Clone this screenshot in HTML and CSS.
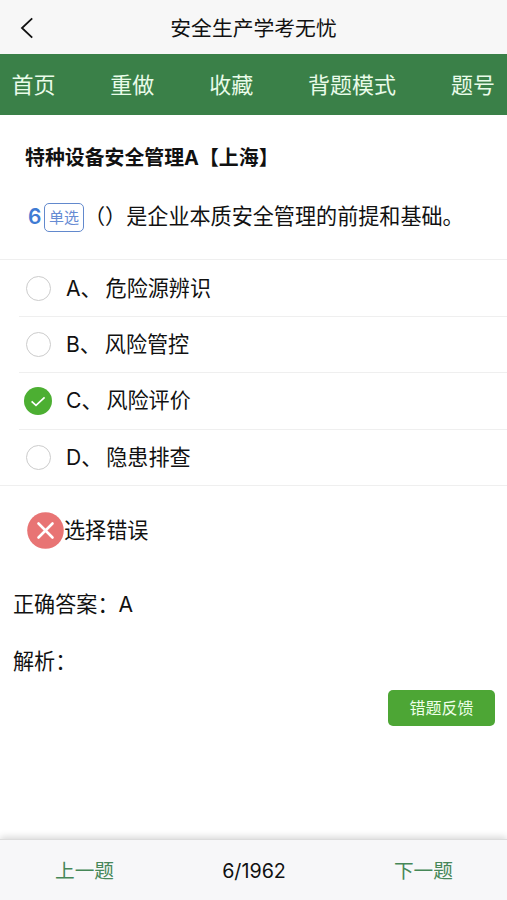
FILE: index.html
```html
<!DOCTYPE html>
<html lang="zh-CN">
<head>
<meta charset="utf-8">
<title>安全生产学考无忧</title>
<link rel="stylesheet" href="styles.css">
</head>
<body>
<div class="app">
  <header class="titlebar">
    <svg class="back" viewBox="0 0 14 22"><path d="M12.2 1.4 2 11l10.2 9.6"/></svg>
    <h1>安全生产学考无忧</h1>
  </header>
  <nav class="tabs">
    <a>首页</a><a>重做</a><a>收藏</a><a>背题模式</a><a>题号</a>
  </nav>
  <main>
    <h2 class="subject">特种设备安全管理A【上海】</h2>
    <div class="question"><b class="number">6</b><span class="tag">单选</span><span class="stem">（）是企业本质安全管理的前提和基础。</span></div>
    <ul class="options">
      <li><span class="mark"><i class="radio"></i></span><span class="label">A、 危险源辨识</span></li>
      <li><span class="mark"><i class="radio"></i></span><span class="label">B、 风险管控</span></li>
      <li><span class="mark"><svg class="checked" viewBox="0 0 28 28"><circle cx="14" cy="14" r="14"/><path d="m7.6 14.3 4.4 4 8.6-7.9"/></svg></span><span class="label">C、 风险评价</span></li>
      <li><span class="mark"><i class="radio"></i></span><span class="label">D、 隐患排查</span></li>
    </ul>
    <div class="result">
      <svg class="wrong" viewBox="0 0 37 37"><circle cx="18.5" cy="18.5" r="18.3"/><path d="m11.5 11.5 14 14m0-14-14 14"/></svg>
      <span class="verdict">选择错误</span>
    </div>
    <p class="answer">正确答案：A</p>
    <p class="analysis">解析：</p>
    <button class="feedback">错题反馈</button>
  </main>
  <footer class="pager">
    <a class="prev">上一题</a>
    <span class="count">6/1962</span>
    <a class="next">下一题</a>
  </footer>
</div>
</body>
</html>
```
FILE: styles.css
```css
* { box-sizing: border-box; margin: 0; padding: 0; }
body {
  font-family: Inter, "Noto Sans CJK SC", sans-serif;
  font-size: 21.1px;
  color: #111;
  background: #fff;
}
.app { height: 900px; display: flex; flex-direction: column; overflow: hidden; }
.titlebar {
  height: 54px;
  display: grid;
  grid-template-columns: 60px 1fr 60px;
  align-items: center;
  background: #f7f7f7;
}
.back { width: 14px; height: 22px; margin: 2px 0 0 20px; fill: none; stroke: #111; stroke-width: 1.8; }
.titlebar h1 { padding-top: 3px; font-size: 20.8px; font-weight: 400; line-height: 30px; text-align: center; white-space: nowrap; }
.tabs {
  height: 61px;
  padding: 1px 12px 0 11.5px;
  display: flex;
  justify-content: space-between;
  align-items: center;
  background: #3a8048;
  color: #e9fbe9;
  font-size: 22px;
  line-height: 32px;
}
main { flex: 1; display: flex; flex-direction: column; }
.subject { margin: 28px 0 0 25px; font-size: 19.9px; font-weight: 700; line-height: 30px; white-space: nowrap; }
.question { height: 86px; padding: 0 0 0 28px; display: flex; align-items: center; white-space: nowrap; }
.number { width: 16px; color: #3f7bd3; font-size: 21px; font-weight: 600; }
.tag {
  width: 40px;
  height: 29px;
  margin-top: 3px;
  border: 1.5px solid #6289cd;
  border-radius: 5px;
  color: #668bd3;
  font-size: 15px;
  line-height: 27px;
  text-align: center;
}
.stem { line-height: 30px; padding-top: 1px; text-spacing-trim: space-all; }
.options { list-style: none; border-top: 1px solid #efefef; border-bottom: 1px solid #efefef; }
.options li { height: 56.2px; margin-left: 19px; display: flex; align-items: center; }
.options li + li { border-top: 1px solid #efefef; }
.mark { width: 38px; height: 28px; margin: 0 9px 0 0; padding-left: 5px; display: flex; align-items: center; }
.radio { width: 25px; height: 25px; margin-left: 2px; border: 1.3px solid #ccc; border-radius: 50%; }
.checked { width: 28px; height: 28px; }
.checked circle { fill: #4caf32; }
.checked path { fill: none; stroke: #fff; stroke-width: 1.7; }
.label { padding-top: 1px; line-height: 30px; white-space: pre; word-spacing: -2px; }
.result { margin: 26px 0 0 27px; height: 37px; display: flex; align-items: center; }
.verdict { line-height: 30px; padding-top: 1px; }
.wrong { width: 37px; height: 37px; flex: none; }
.wrong circle { fill: #e87474; }
.wrong path { fill: none; stroke: #fff; stroke-width: 2.6; stroke-linecap: round; }
.answer { margin: 41px 0 0 13px; line-height: 30px; }
.analysis { margin: 27px 0 0 13px; line-height: 30px; }
.feedback {
  align-self: flex-end;
  width: 107px;
  height: 36px;
  margin: 13px 12px 0 0;
  border: 0;
  border-radius: 5px;
  background: #4da635;
  color: #eeffe9;
  font-family: inherit;
  font-size: 16px;
  line-height: 36px;
}
.pager {
  height: 61px;
  padding: 1px 54px 0 55px;
  display: grid;
  grid-template-columns: 1fr auto 1fr;
  align-items: center;
  background: #f7f7f9;
  border-top: 1px solid #dcdcdc;
  box-shadow: 0 -2px 7px rgba(0, 0, 0, .16);
  font-size: 19.7px;
  line-height: 30px;
}
.prev, .next { color: #468758; }
.next { text-align: right; }
```
